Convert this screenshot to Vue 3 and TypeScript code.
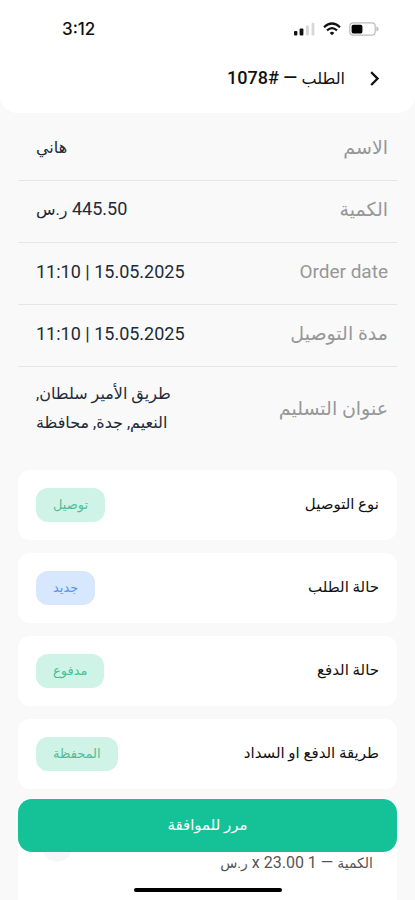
<script setup lang="ts">
interface Detail {
  label: string
  value: string
  wraps?: boolean
}

interface Status {
  label: string
  value: string
  tone: 'green' | 'blue'
}

const details: Detail[] = [
  { label: 'الاسم', value: 'هاني' },
  { label: 'الكمية', value: '445.50 ر.س' },
  { label: 'Order date', value: '15.05.2025 | 11:10' },
  { label: 'مدة التوصيل', value: '15.05.2025 | 11:10' },
  { label: 'عنوان التسليم', value: 'طريق الأمير سلطان, النعيم, جدة, محافظة', wraps: true },
]

const statuses: Status[] = [
  { label: 'نوع التوصيل', value: 'توصيل', tone: 'green' },
  { label: 'حالة الطلب', value: 'جديد', tone: 'blue' },
  { label: 'حالة الدفع', value: 'مدفوع', tone: 'green' },
  { label: 'طريقة الدفع او السداد', value: 'المحفظة', tone: 'green' },
]

/* Splits mixed text so that Arabic words and digits can be sized separately. */
function parts(text: string): { text: string; arabic: boolean }[] {
  return text
    .split(/([\u0600-\u06FF](?:[\u0600-\u06FF ,.]*[\u0600-\u06FF,])?)/)
    .filter((piece) => piece !== '')
    .map((piece) => ({ text: piece, arabic: /[\u0600-\u06FF]/.test(piece) }))
}
</script>

<template>
  <div class="page" dir="rtl" lang="ar">
    <header class="header">
      <div class="status-bar" dir="ltr">
        <span class="clock">3:12</span>
        <div class="indicators">
          <svg width="21" height="14" viewBox="0 0 21 14" aria-hidden="true">
            <rect x="0" y="9" width="3.4" height="4.4" rx="1" fill="#111" />
            <rect x="5.6" y="6.5" width="3.8" height="7" rx="1" fill="#111" />
            <rect x="12" y="3.4" width="2.8" height="10" rx="1" fill="#d6d6d6" />
            <rect x="17.6" y="0.8" width="2.8" height="12.6" rx="1" fill="#d6d6d6" />
          </svg>
          <svg width="18" height="14" viewBox="0 0 18 14" aria-hidden="true">
            <path d="M1 5.2Q9 -2.2 17 5.2" fill="none" stroke="#111" stroke-width="2.2" />
            <path d="M4 8.4Q9 3.9 14 8.4" fill="none" stroke="#111" stroke-width="2.1" />
            <path d="M6.7 10.9Q9 8.8 11.3 10.9L9 13.2Z" fill="#111" />
          </svg>
          <svg width="30" height="14" viewBox="0 0 30 14" aria-hidden="true">
            <rect x="0.8" y="0.8" width="25.4" height="12.4" rx="3.4" fill="#fff" stroke="#bcbcbc" stroke-width="1.2" />
            <rect x="2.6" y="2.8" width="10.8" height="8.6" rx="1.6" fill="#000" />
            <path d="M27.4 4.6Q29.6 5.4 29.6 7T27.4 9.4Z" fill="#bcbcbc" />
          </svg>
        </div>
      </div>
      <div class="title-bar">
        <button class="back" type="button" aria-label="رجوع">
          <svg width="12" height="16" viewBox="0 0 12 16" aria-hidden="true">
            <path d="M3 3L8.6 8.6L3 14.2" fill="none" stroke="#111" stroke-width="2.3" stroke-linecap="square" />
          </svg>
        </button>
        <h1 class="title">
          <span v-for="(p, i) in parts('الطلب — #1078')" :key="i" :class="{ ar: p.arabic }">{{ p.text }}</span>
        </h1>
      </div>
    </header>

    <main class="content">
      <dl class="details">
        <div v-for="d in details" :key="d.label" class="detail" :class="{ tall: d.wraps }">
          <dt class="detail-label">{{ d.label }}</dt>
          <dd class="detail-value">
            <span v-for="(p, i) in parts(d.value)" :key="i" :class="{ ar: p.arabic }">{{ p.text }}</span>
          </dd>
        </div>
      </dl>

      <section class="cards">
        <div v-for="s in statuses" :key="s.label" class="card">
          <span class="card-label">{{ s.label }}</span>
          <span class="badge" :class="s.tone">{{ s.value }}</span>
        </div>
        <div class="card product">
          <span class="quantity">
            <span v-for="(p, i) in parts('الكمية — 1 x 23.00 ر.س')" :key="i" :class="{ ar: p.arabic }">{{ p.text }}</span>
          </span>
          <span class="thumb"></span>
        </div>
      </section>
    </main>

    <footer class="footer">
      <button class="approve" type="button">مرر للموافقة</button>
      <span class="home-indicator"></span>
    </footer>
  </div>
</template>

<style>
body {
  background: #f9f9f9;
}
</style>

<style scoped>
* {
  box-sizing: border-box;
}

.page {
  position: relative;
  height: 100vh;
  overflow: hidden;
  background: #f9f9f9;
  font-family: Roboto, "DejaVu Sans", sans-serif;
  color: #111;
}

.header {
  background: #fff;
  border-radius: 0 0 18px 18px;
  padding-bottom: 19px;
}

.status-bar {
  display: flex;
  justify-content: space-between;
  align-items: center;
  height: 58px;
  padding: 0 36px 0 62px;
}

.clock {
  font-family: Inter, sans-serif;
  font-size: 17px;
  font-weight: 500;
}

.indicators {
  display: flex;
  align-items: center;
  gap: 8px;
}

.title-bar {
  display: flex;
  align-items: center;
  gap: 24px;
  height: 36px;
  padding: 4px 34px 0;
}

.back {
  display: flex;
  padding: 0;
  border: 0;
  background: none;
}

.title {
  margin: 0;
  font-size: 18px;
  font-weight: 500;
  line-height: 24px;
}

.title .ar {
  font-size: 16px;
}

.content {
  padding: 6px 18px 0;
}

.details {
  margin: 0;
}

.detail {
  display: flex;
  justify-content: space-between;
  align-items: center;
  height: 62px;
  padding: 0 9px 4px 18px;
  border-bottom: 1px solid #e6e6e8;
}

.detail.tall {
  height: 82px;
  padding-bottom: 0;
  border-bottom: 0;
}

.detail-label {
  font-size: 19px;
  color: #979797;
}

.detail-value {
  width: 152px;
  margin: 0;
  text-align: left;
  font-size: 18px;
  line-height: 28px;
  color: #222a38;
}

.detail-value .ar {
  font-size: 16px;
}

.cards {
  display: flex;
  flex-direction: column;
  gap: 13px;
  padding-top: 21px;
}

.card {
  display: flex;
  justify-content: space-between;
  align-items: center;
  height: 70px;
  padding: 0 18px;
  border-radius: 12px;
  background: #fff;
}

.card-label {
  padding-bottom: 2px;
  font-size: 15px;
}

.badge {
  padding: 0 17px;
  border-radius: 12px;
  font-size: 13px;
  line-height: 34px;
}

.badge.green {
  background: #cff4e7;
  color: #4fbe99;
}

.badge.blue {
  background: #d6e7fe;
  color: #5a94ec;
}

.product {
  height: 120px;
  padding: 0 24px;
}

.quantity {
  font-size: 16px;
  color: #555;
}

.quantity .ar {
  font-size: 14px;
}

.thumb {
  width: 30px;
  height: 30px;
  margin-bottom: 30px;
  border-radius: 50%;
  background: #f7f7fa;
}

.footer {
  position: absolute;
  inset: auto 18px 8px;
  display: flex;
  flex-direction: column;
  align-items: center;
  gap: 36px;
}

.approve {
  width: 100%;
  height: 53px;
  padding: 0 0 2px;
  border: 0;
  border-radius: 14px;
  background: #15c297;
  color: #fff;
  font-family: inherit;
  font-size: 15px;
}

.home-indicator {
  width: 148px;
  height: 4px;
  border-radius: 2px;
  background: #000;
}
</style>
